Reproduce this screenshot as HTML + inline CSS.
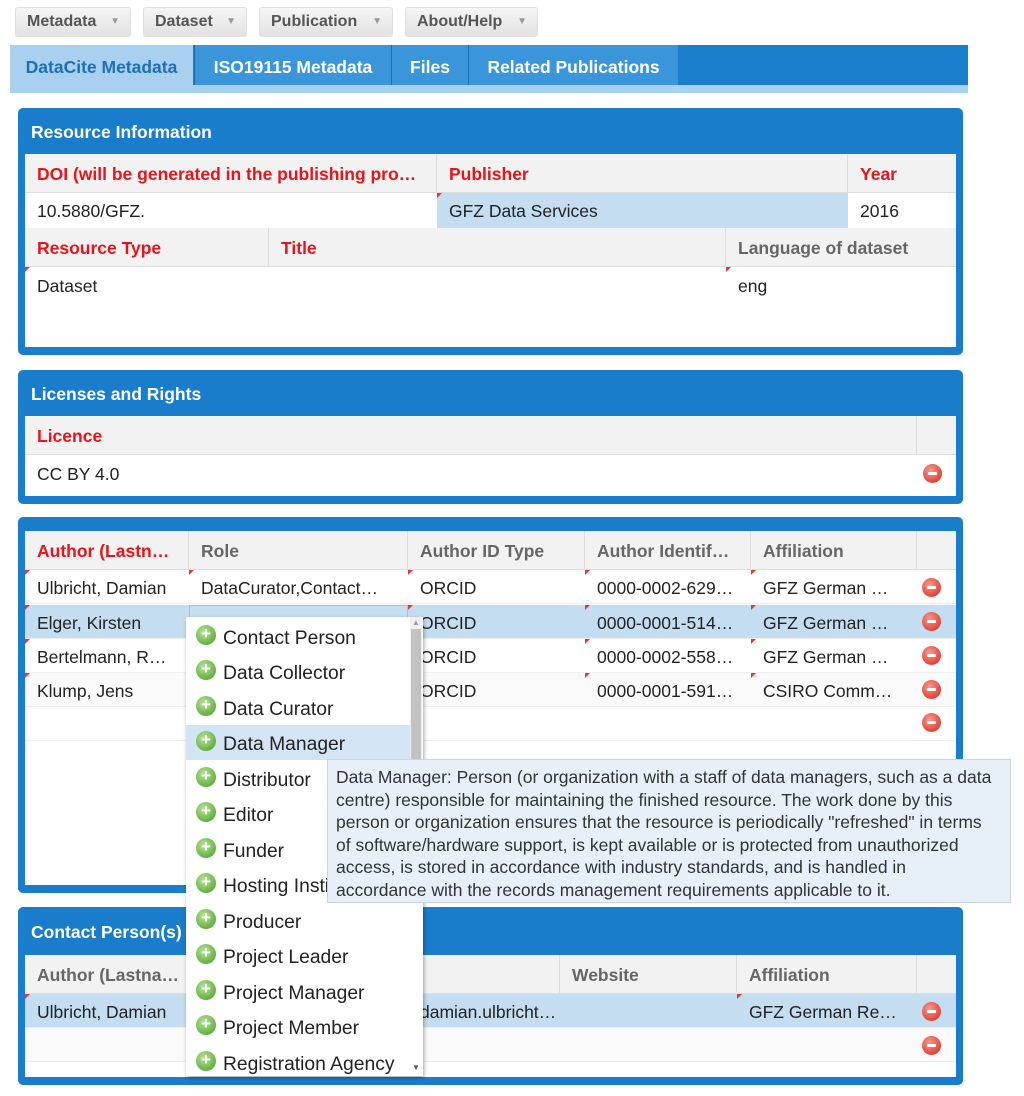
<!DOCTYPE html>
<html><head><meta charset="utf-8"><style>
*{box-sizing:border-box;margin:0;padding:0}
body{width:1024px;height:1096px;background:#fff;position:relative;overflow:hidden;font-family:"Liberation Sans",Arial,sans-serif;font-size:17.5px;color:#222}
.a{position:absolute}
.btn{position:absolute;top:7px;height:30px;border-radius:3px;background:linear-gradient(#f6f6f6,#e2e2e2);border:1px solid #e0e0e0;color:#555;font-weight:bold;font-size:16px;line-height:28px;padding-left:11px}
.btn:after{content:"▼";font-size:10px;color:#999;position:absolute;right:10px;top:0}
.tab{position:absolute;top:45px;height:40px;background:#3b95da;color:#fff;font-weight:bold;font-size:17.5px;line-height:45px;text-align:center;border-left:1px solid #1a6db5}
.panel{position:absolute;left:18px;width:945px;background:#1a7dcb;border-radius:5px}
.pt{position:absolute;left:13px;color:#fff;font-weight:bold;font-size:17.5px}
.in{position:absolute;left:7px;right:7px;background:#fff}
.h{position:absolute;height:39px;background:#f2f2f2;border-right:1px solid #ddd;border-bottom:1px solid #ddd;line-height:40px;padding-left:12px;font-weight:bold;font-size:17.5px;color:#666;white-space:nowrap;overflow:hidden}
.r{color:#e8141a}
.c{position:absolute;line-height:37px;padding-left:12px;white-space:nowrap;font-size:17.5px;color:#222}
.row{position:absolute;left:0;right:0;height:34px;border-bottom:1px solid #eee}
.sel{background:#c4ddf1}
.tri{position:absolute;width:0;height:0;border-top:5px solid #e33;border-right:5px solid transparent}
.minus{position:absolute;width:19px;height:19px;border-radius:50%;background:radial-gradient(circle at 40% 35%,#f69a8f,#e0453a 70%);}
.minus:after{content:"";position:absolute;left:5px;top:8px;width:9px;height:3px;background:#fff;border-radius:1px}
.dd{position:absolute;left:186px;top:617px;width:237px;height:459px;background:#fff;box-shadow:1px 2px 4px rgba(0,0,0,.35)}
.it{position:absolute;left:0;width:224px;height:35px;font-size:19.3px;line-height:40px;padding-left:37px;color:#222;white-space:nowrap;overflow:hidden}
.it:before{content:"";position:absolute;left:10px;top:6px;width:20px;height:20px;border-radius:50%;background:radial-gradient(circle at 40% 35%,#b9e39a,#5fae3c 75%)}
.it:after{content:"+";position:absolute;left:10px;top:-1px;width:20px;text-align:center;color:#fff;font-weight:bold;font-size:17px;line-height:32px}
.tip{position:absolute;left:327px;top:759px;width:684px;height:144px;background:#e7f0f9;border:1px solid #c8d6e4;font-size:17.5px;line-height:22.5px;padding:6px 4px 6px 8px;color:#333;white-space:nowrap}
</style></head><body>

<div class="btn" style="left:15px;width:116px">Metadata</div>
<div class="btn" style="left:143px;width:104px">Dataset</div>
<div class="btn" style="left:259px;width:134px">Publication</div>
<div class="btn" style="left:405px;width:133px">About/Help</div>

<div class="a" style="left:10px;top:45px;width:958px;height:48px;background:#a9d0ee"></div>
<div class="a" style="left:193px;top:45px;width:775px;height:40px;background:#1a7fcc"></div>
<div class="tab" style="left:10px;width:183px;background:#a9d0ee;color:#1f6fb5;border:none">DataCite Metadata</div>
<div class="tab" style="left:194px;width:197px">ISO19115 Metadata</div>
<div class="tab" style="left:391px;width:77px">Files</div>
<div class="tab" style="left:468px;width:210px">Related Publications</div>

<!-- Panel 1 -->
<div class="panel" style="top:108px;height:247px">
 <div class="pt" style="top:14px">Resource Information</div>
 <div class="in" style="top:46px;height:193px">
  <div class="h r" style="left:0;top:0;width:412px">DOI (will be generated in the publishing pro…</div>
  <div class="h r" style="left:412px;top:0;width:411px">Publisher</div>
  <div class="h r" style="left:823px;top:0;width:108px;border-right:none">Year</div>
  <div class="c" style="left:0;top:39px;width:412px;height:35px">10.5880/GFZ.</div>
  <div class="c sel" style="left:412px;top:39px;width:411px;height:35px">GFZ Data Services</div>
  <div class="tri" style="left:412px;top:39px"></div>
  <div class="c" style="left:823px;top:39px">2016</div>
  <div class="h r" style="left:0;top:74px;width:244px">Resource Type</div>
  <div class="h r" style="left:244px;top:74px;width:457px">Title</div>
  <div class="h" style="left:701px;top:74px;width:230px;border-right:none">Language of dataset</div>
  <div class="tri" style="left:0;top:113px"></div>
  <div class="c" style="left:0;top:114px">Dataset</div>
  <div class="tri" style="left:701px;top:113px"></div>
  <div class="c" style="left:701px;top:114px">eng</div>
 </div>
</div>

<!-- Panel 2 -->
<div class="panel" style="top:370px;height:134px">
 <div class="pt" style="top:14px">Licenses and Rights</div>
 <div class="in" style="top:46px;height:80px">
  <div class="h r" style="left:0;top:0;width:892px">Licence</div>
  <div class="h" style="left:892px;top:0;width:39px;border-right:none"></div>
  <div class="c" style="left:0;top:40px">CC BY 4.0</div>
  <div class="minus" style="left:898px;top:48px"></div>
 </div>
</div>

<!-- Panel 3 -->
<div class="panel" style="top:517px;height:376px">
 <div class="in" style="top:14px;height:354px">
  <div class="h r" style="left:0;top:0;width:164px">Author (Lastn…</div>
  <div class="h" style="left:164px;top:0;width:219px">Role</div>
  <div class="h" style="left:383px;top:0;width:177px">Author ID Type</div>
  <div class="h" style="left:560px;top:0;width:166px">Author Identif…</div>
  <div class="h" style="left:726px;top:0;width:166px">Affiliation</div>
  <div class="h" style="left:892px;top:0;width:39px;border-right:none"></div>
  <div class="row" style="top:39px"></div>
  <div class="row sel" style="top:74px"></div>
  <div class="row" style="top:108px"></div>
  <div class="row" style="top:142px;background:#fafafa"></div>
  <div class="row" style="top:176px"></div>
  <div class="c" style="left:0;top:39px">Ulbricht, Damian</div>
  <div class="c" style="left:164px;top:39px">DataCurator,Contact…</div>
  <div class="c" style="left:383px;top:39px">ORCID</div>
  <div class="c" style="left:560px;top:39px">0000-0002-629…</div>
  <div class="c" style="left:726px;top:39px">GFZ German …</div>
  <div class="c" style="left:0;top:74px">Elger, Kirsten</div>
  <div class="c" style="left:383px;top:74px">ORCID</div>
  <div class="c" style="left:560px;top:74px">0000-0001-514…</div>
  <div class="c" style="left:726px;top:74px">GFZ German …</div>
  <div class="c" style="left:0;top:108px">Bertelmann, R…</div>
  <div class="c" style="left:383px;top:108px">ORCID</div>
  <div class="c" style="left:560px;top:108px">0000-0002-558…</div>
  <div class="c" style="left:726px;top:108px">GFZ German …</div>
  <div class="c" style="left:0;top:142px">Klump, Jens</div>
  <div class="c" style="left:383px;top:142px">ORCID</div>
  <div class="c" style="left:560px;top:142px">0000-0001-591…</div>
  <div class="c" style="left:726px;top:142px">CSIRO Comm…</div>
  <div class="tri" style="left:0;top:39px"></div><div class="tri" style="left:164px;top:39px"></div><div class="tri" style="left:383px;top:39px"></div><div class="tri" style="left:560px;top:39px"></div><div class="tri" style="left:726px;top:39px"></div>
  <div class="tri" style="left:0;top:74px"></div><div class="tri" style="left:383px;top:74px"></div><div class="tri" style="left:560px;top:74px"></div><div class="tri" style="left:726px;top:74px"></div>
  <div class="tri" style="left:0;top:108px"></div><div class="tri" style="left:560px;top:108px"></div><div class="tri" style="left:726px;top:108px"></div>
  <div class="tri" style="left:0;top:142px"></div><div class="tri" style="left:560px;top:142px"></div><div class="tri" style="left:726px;top:142px"></div>
  <div class="minus" style="left:897px;top:47px"></div>
  <div class="minus" style="left:897px;top:81px"></div>
  <div class="minus" style="left:897px;top:115px"></div>
  <div class="minus" style="left:897px;top:149px"></div>
  <div class="minus" style="left:897px;top:182px"></div>
  <div class="c" style="left:164px;top:74px;width:219px;height:34px;background:#c4ddf1;border:1px solid #9cc3e6">Data M</div>
 </div>
</div>

<!-- Panel 4 -->
<div class="panel" style="top:907px;height:178px">
 <div class="pt" style="top:15px">Contact Person(s)</div>
 <div class="in" style="top:48px;height:122px">
  <div class="h" style="left:0;top:0;width:164px">Author (Lastna…</div>
  <div class="h" style="left:164px;top:0;width:371px">Email</div>
  <div class="h" style="left:535px;top:0;width:177px">Website</div>
  <div class="h" style="left:712px;top:0;width:180px">Affiliation</div>
  <div class="h" style="left:892px;top:0;width:39px;border-right:none"></div>
  <div class="row sel" style="top:39px"></div>
  <div class="row" style="top:73px;background:#fafafa"></div>
  <div class="c" style="left:0;top:39px">Ulbricht, Damian</div>
  <div class="c" style="left:383px;top:39px">damian.ulbricht…</div>
  <div class="c" style="left:712px;top:39px">GFZ German Re…</div>
  <div class="tri" style="left:0;top:39px"></div><div class="tri" style="left:712px;top:39px"></div>
  <div class="minus" style="left:897px;top:47px"></div>
  <div class="minus" style="left:897px;top:81px"></div>
 </div>
</div>

<!-- Dropdown -->
<div class="dd">
 <div class="a" style="left:224px;top:0;width:12px;height:150px;background:#f0f0f0"></div>
 <div class="a" style="left:225px;top:12px;width:10px;height:135px;background:#c2c2c2"></div>
 <div class="a" style="left:226px;top:446px;font-size:8px;color:#555">▼</div>
 <div class="a" style="left:226px;top:1px;font-size:8px;color:#999">▲</div>
 <div class="it" style="top:2px">Contact Person</div>
 <div class="it" style="top:37px">Data Collector</div>
 <div class="it" style="top:73px">Data Curator</div>
 <div class="it" style="top:108px;background:#d3e5f5">Data Manager</div>
 <div class="it" style="top:144px">Distributor</div>
 <div class="it" style="top:179px">Editor</div>
 <div class="it" style="top:215px">Funder</div>
 <div class="it" style="top:250px">Hosting Institution</div>
 <div class="it" style="top:286px">Producer</div>
 <div class="it" style="top:321px">Project Leader</div>
 <div class="it" style="top:357px">Project Manager</div>
 <div class="it" style="top:392px">Project Member</div>
 <div class="it" style="top:428px">Registration Agency</div>
</div>

<div class="tip">Data Manager: Person (or organization with a staff of data managers, such as a data<br>centre) responsible for maintaining the finished resource. The work done by this<br>person or organization ensures that the resource is periodically "refreshed" in terms<br>of software/hardware support, is kept available or is protected from unauthorized<br>access, is stored in accordance with industry standards, and is handled in<br>accordance with the records management requirements applicable to it.</div>

</body></html>
